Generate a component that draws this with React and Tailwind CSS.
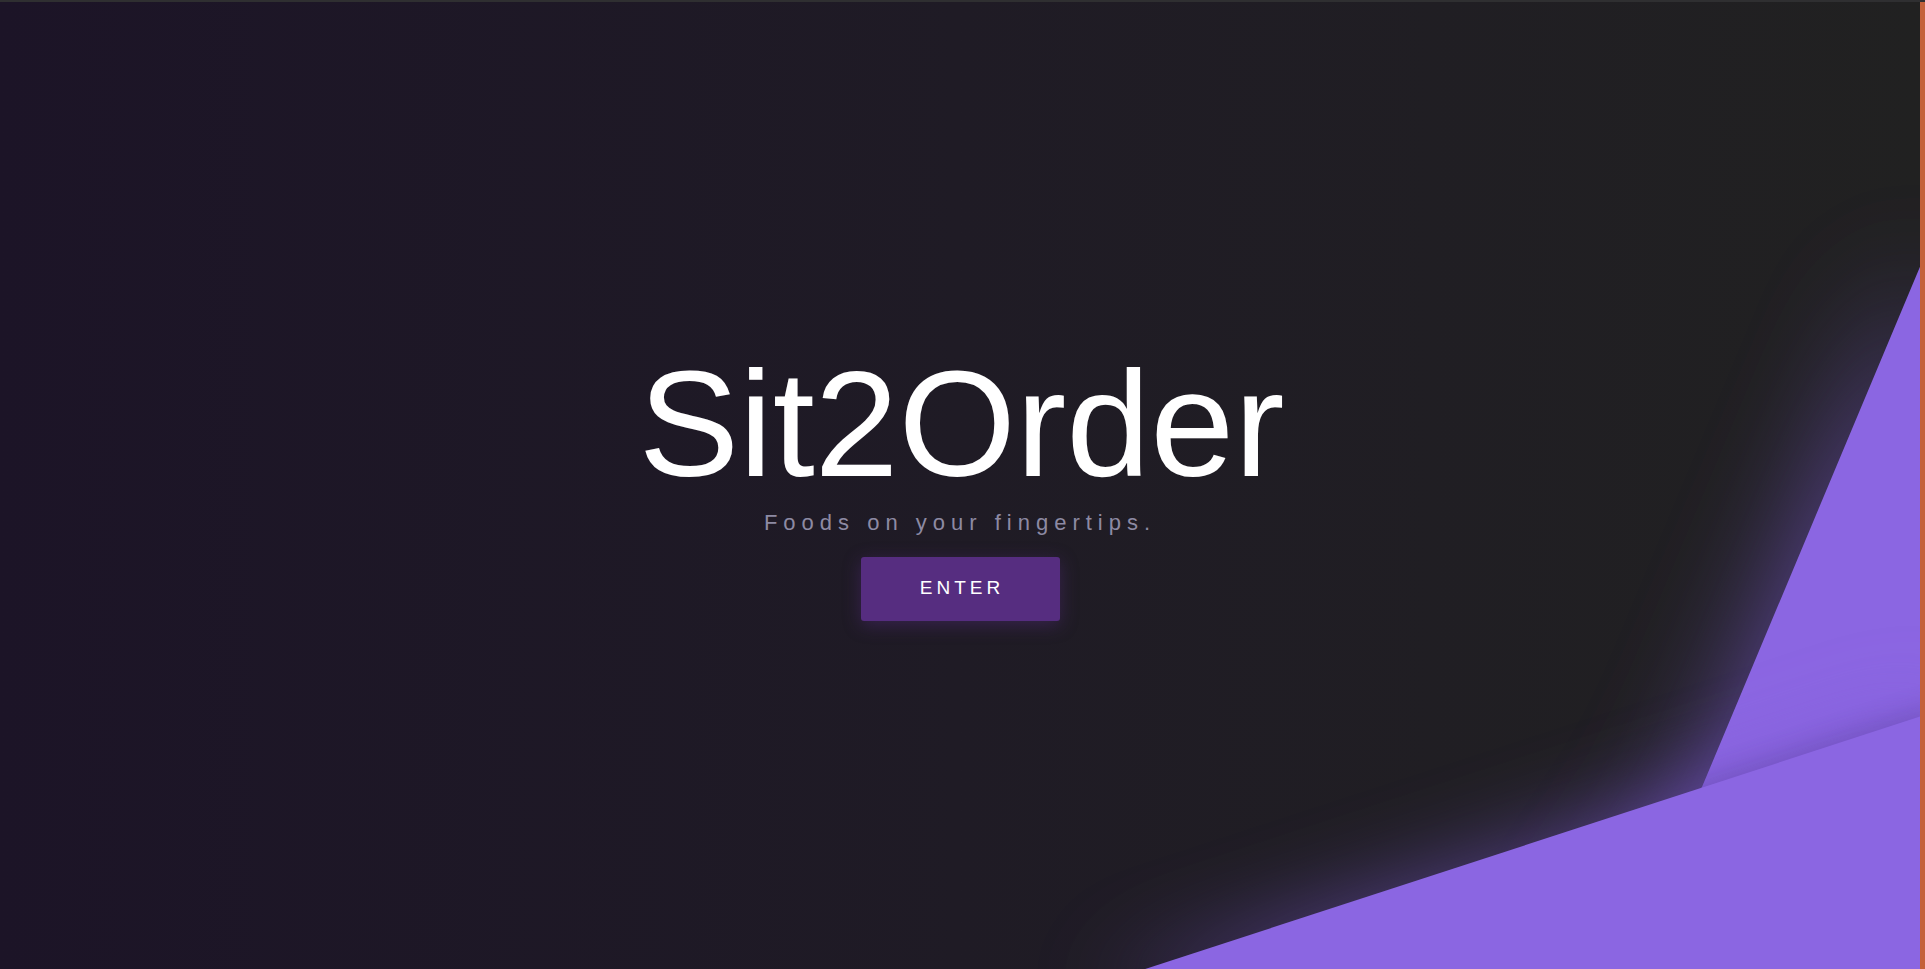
import React from "react";

function Shapes() {
  return (
    <svg
      className="absolute inset-0 pointer-events-none"
      width="1920"
      height="967"
      viewBox="0 2 1920 967"
      preserveAspectRatio="none"
    >
      <defs>
        <filter id="glowA" x="-50%" y="-50%" width="200%" height="200%">
          <feGaussianBlur stdDeviation="60" />
        </filter>
        <filter id="glowB" x="-50%" y="-50%" width="200%" height="200%">
          <feGaussianBlur stdDeviation="45" />
        </filter>
        <filter id="shadowB" x="-50%" y="-50%" width="200%" height="200%">
          <feGaussianBlur stdDeviation="12" />
        </filter>
        <clipPath id="clipA">
          <polygon points="1922,262 1702,787 1560,1000 1922,1000" />
        </clipPath>
      </defs>
      <polygon
        points="1922,262 1702,787 1560,1000 1922,1000"
        fill="#7a58d0"
        opacity="0.7"
        filter="url(#glowA)"
      />
      <polygon points="1922,262 1702,787 1560,1000 1922,1000" fill="#8b66e2" />
      <polygon
        points="1940,710 1090,987 1940,987"
        fill="#7a58d0"
        opacity="0.55"
        filter="url(#glowB)"
      />
      <g clipPath="url(#clipA)">
        <polygon
          points="1940,702 1090,979 1940,979"
          fill="#2a1a55"
          opacity="0.18"
          filter="url(#shadowB)"
        />
      </g>
      <polygon points="1940,710 1090,987 1940,987" fill="#8b66e2" />
    </svg>
  );
}

export default function App() {
  return (
    <div
      className="w-full h-[969px] flex flex-col overflow-hidden"
      style={{ fontFamily: '"Liberation Sans", Arial, sans-serif' }}
    >
      <div className="h-[2px] w-full bg-[#2f2f31] shrink-0" />
      <div className="flex flex-1 min-h-0">
        <div className="relative flex-1 overflow-hidden bg-gradient-to-r from-[#1c1427] via-[#1f1b25] to-[#212121]">
          <Shapes />
          <div className="relative h-full flex flex-col items-center justify-center pb-[3px]">
            <h1 className="text-[151px] leading-none font-normal text-white pl-[3px]">
              Sit2Order
            </h1>
            <p className="mt-[13px] text-[22px] leading-none tracking-[6px] text-[#8d8aa3]">
              Foods on your fingertips.
            </p>
            <button className="mt-[23px] w-[199px] h-[64px] rounded-[3px] bg-[#562d80] text-white text-[19px] tracking-[4px] pl-[4px] shadow-[0_4px_18px_rgba(86,45,128,0.45)]">
              ENTER
            </button>
          </div>
        </div>
        <div className="w-[5px] shrink-0 bg-[#c4613a]" />
      </div>
    </div>
  );
}
